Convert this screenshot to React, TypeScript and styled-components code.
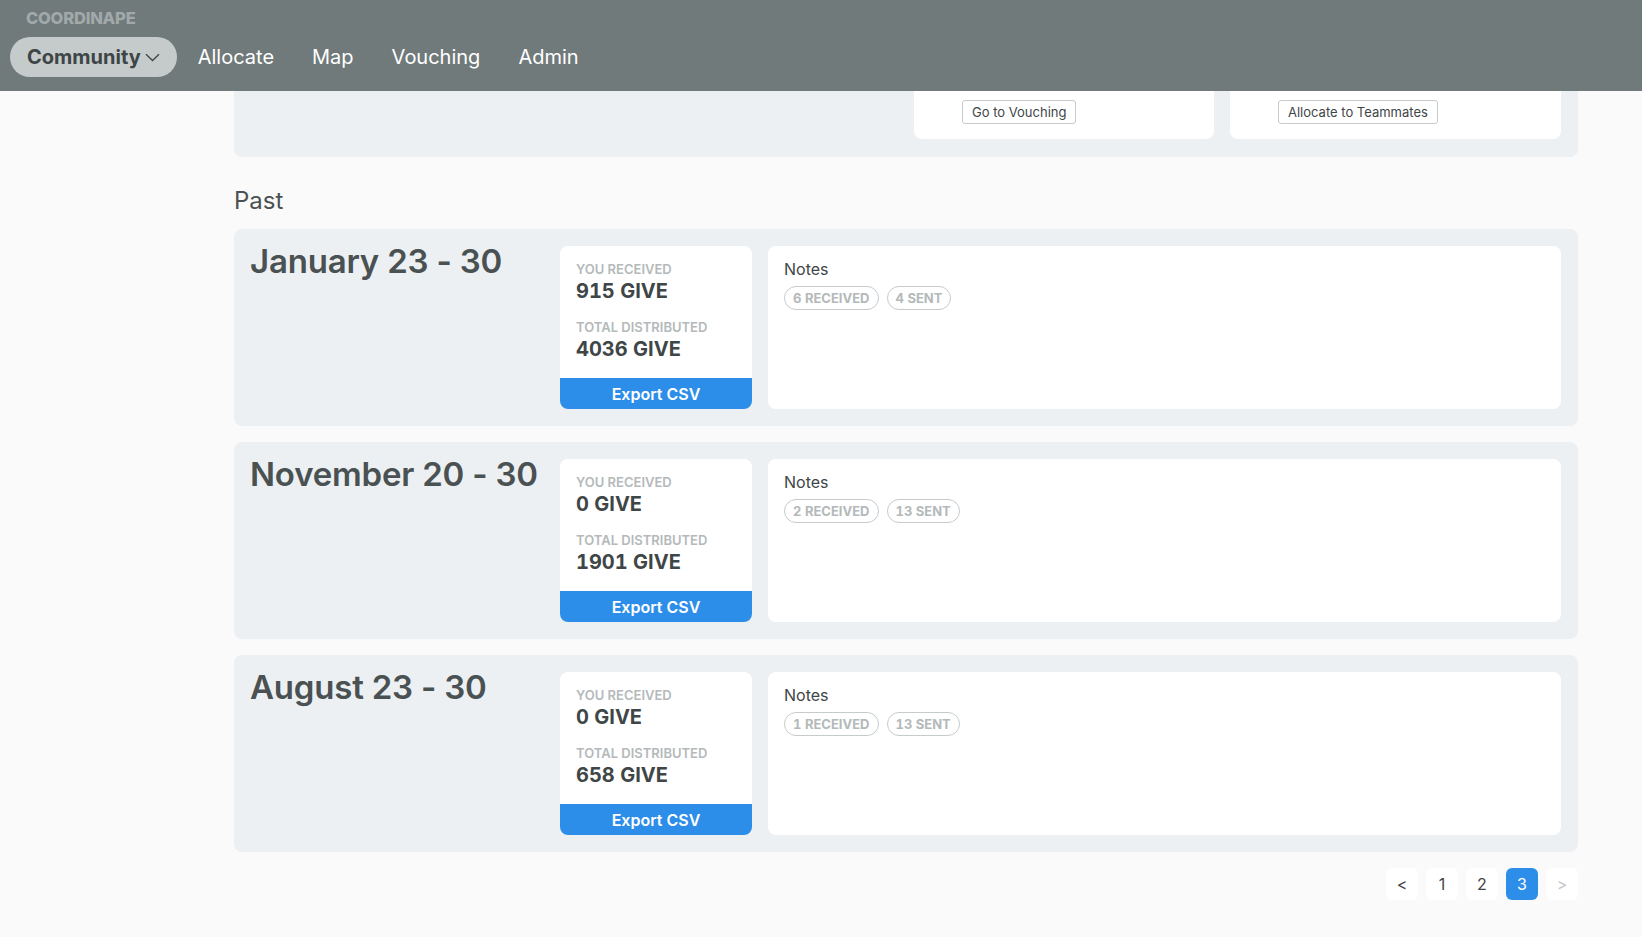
import React from "react";
import styled, { createGlobalStyle } from "styled-components";

const GlobalStyle = createGlobalStyle`
  html, body {
    margin: 0;
    padding: 0;
    background: #fafafa;
    font-family: Inter, "Noto Sans", sans-serif;
    color: #3f4647;
    overflow: hidden;
  }
  * { box-sizing: border-box; }
`;

const Header = styled.header`
  height: 91px;
  background: #707a7b;
  padding: 8px 10px 0;
  display: flex;
  flex-direction: column;
`;

const Brand = styled.div`
  font-size: 16.5px;
  font-weight: 800;
  color: #a1a9aa;
  letter-spacing: -0.2px;
  padding-left: 16px;
  line-height: 20px;
`;

const Nav = styled.nav`
  display: flex;
  align-items: center;
  gap: 4px;
  margin-top: 9px;
`;

const NavItem = styled.a<{ $active?: boolean }>`
  display: flex;
  align-items: center;
  gap: 4px;
  height: 40px;
  padding: 0 17px;
  border-radius: 20px;
  font-size: 20px;
  font-weight: ${(p) => (p.$active ? 700 : 400)};
  color: ${(p) => (p.$active ? "#3e4546" : "#ffffff")};
  background: ${(p) => (p.$active ? "#c5cbcb" : "transparent")};
  cursor: pointer;
`;

const Main = styled.main`
  padding: 0 64px 0 234px;
  display: flex;
  flex-direction: column;
`;

const TopCard = styled.section`
  background: #edf0f3;
  border-radius: 0 0 8px 8px;
  padding: 0 17px 18px;
  display: flex;
  gap: 16px;
  justify-content: flex-end;
`;

const TopBox = styled.div<{ $w: number }>`
  width: ${(p) => p.$w}px;
  height: 48px;
  background: #ffffff;
  border-radius: 0 0 8px 8px;
  padding: 9px 48px 0;
`;

const SmallButton = styled.button`
  height: 24px;
  padding: 0 9px;
  border: 1px solid #c6cbcc;
  border-radius: 3px;
  background: #ffffff;
  font-family: inherit;
  font-size: 13px;
  color: #3f4647;
`;

const SectionTitle = styled.h2`
  margin: 29px 0 14px;
  font-size: 24px;
  font-weight: 400;
  line-height: 29px;
  color: #4a5152;
`;

const EpochList = styled.div`
  display: flex;
  flex-direction: column;
  gap: 16px;
`;

const EpochCard = styled.article`
  background: #edf0f3;
  border-radius: 8px;
  padding: 17px 17px 17px 16px;
  display: flex;
  gap: 16px;
`;

const EpochTitle = styled.h3`
  width: 294px;
  margin: -5px 0 0;
  font-size: 33px;
  font-weight: 600;
  line-height: 40px;
  color: #4a5152;
  letter-spacing: -0.2px;
`;

const StatsCard = styled.div`
  width: 192px;
  background: #ffffff;
  border-radius: 8px;
  display: flex;
  flex-direction: column;
  overflow: hidden;
`;

const StatsBody = styled.div`
  padding: 15px 16px 17px;
  display: flex;
  flex-direction: column;
  gap: 16px;
`;

const Stat = styled.div`
  display: flex;
  flex-direction: column;
  gap: 2px;
`;

const StatLabel = styled.span`
  font-size: 13px;
  font-weight: 600;
  line-height: 16px;
  color: #b4b9ba;
  text-transform: uppercase;
`;

const StatValue = styled.span`
  font-size: 20px;
  font-weight: 700;
  line-height: 24px;
  color: #3f4647;
  font-variant-numeric: tabular-nums;
`;

const ExportButton = styled.button`
  height: 31px;
  border: none;
  background: #2d8eea;
  color: #ffffff;
  font-family: inherit;
  font-size: 16px;
  font-weight: 600;
  margin-top: auto;
`;

const NotesCard = styled.div`
  flex: 1;
  background: #ffffff;
  border-radius: 8px;
  padding: 13px 16px;
  display: flex;
  flex-direction: column;
  gap: 7px;
`;

const NotesTitle = styled.span`
  font-size: 16px;
  line-height: 20px;
  color: #3f4647;
`;

const Pills = styled.div`
  display: flex;
  gap: 8px;
`;

const Pill = styled.span`
  height: 24px;
  padding: 0 8px;
  border: 1px solid #c6cbcc;
  border-radius: 12px;
  display: flex;
  align-items: center;
  font-size: 13px;
  font-weight: 700;
  color: #b4b9ba;
  text-transform: uppercase;
  font-variant-numeric: tabular-nums;
`;

const Pagination = styled.div`
  display: flex;
  justify-content: flex-end;
  gap: 8px;
  margin-top: 16px;
`;

const PageButton = styled.button<{ $active?: boolean; $disabled?: boolean }>`
  width: 32px;
  height: 32px;
  border: none;
  border-radius: 6px;
  font-family: inherit;
  font-size: 16px;
  background: ${(p) => (p.$active ? "#2d8eea" : "#ffffff")};
  color: ${(p) => (p.$active ? "#ffffff" : p.$disabled ? "#c2c6c7" : "#3f4647")};
`;

const Chevron = () => (
  <svg width="15" height="9" viewBox="0 0 15 9" fill="none">
    <path d="M1 1.2L7.5 7.5L14 1.2" stroke="#3e4546" strokeWidth="1.3" />
  </svg>
);

type Epoch = {
  title: string;
  received: string;
  distributed: string;
  notesReceived: number;
  notesSent: number;
};

const epochs: Epoch[] = [
  { title: "January 23 - 30", received: "915 GIVE", distributed: "4036 GIVE", notesReceived: 6, notesSent: 4 },
  { title: "November 20 - 30", received: "0 GIVE", distributed: "1901 GIVE", notesReceived: 2, notesSent: 13 },
  { title: "August 23 - 30", received: "0 GIVE", distributed: "658 GIVE", notesReceived: 1, notesSent: 13 },
];

export default function App() {
  return (
    <>
      <GlobalStyle />
      <Header>
        <Brand>COORDINAPE</Brand>
        <Nav>
          <NavItem $active>
            Community <Chevron />
          </NavItem>
          <NavItem>Allocate</NavItem>
          <NavItem>Map</NavItem>
          <NavItem>Vouching</NavItem>
          <NavItem>Admin</NavItem>
        </Nav>
      </Header>
      <Main>
        <TopCard>
          <TopBox $w={300}>
            <SmallButton>Go to Vouching</SmallButton>
          </TopBox>
          <TopBox $w={331}>
            <SmallButton>Allocate to Teammates</SmallButton>
          </TopBox>
        </TopCard>
        <SectionTitle>Past</SectionTitle>
        <EpochList>
          {epochs.map((e) => (
            <EpochCard key={e.title}>
              <EpochTitle>{e.title}</EpochTitle>
              <StatsCard>
                <StatsBody>
                  <Stat>
                    <StatLabel>You received</StatLabel>
                    <StatValue>{e.received}</StatValue>
                  </Stat>
                  <Stat>
                    <StatLabel>Total distributed</StatLabel>
                    <StatValue>{e.distributed}</StatValue>
                  </Stat>
                </StatsBody>
                <ExportButton>Export CSV</ExportButton>
              </StatsCard>
              <NotesCard>
                <NotesTitle>Notes</NotesTitle>
                <Pills>
                  <Pill>{e.notesReceived} Received</Pill>
                  <Pill>{e.notesSent} Sent</Pill>
                </Pills>
              </NotesCard>
            </EpochCard>
          ))}
        </EpochList>
        <Pagination>
          <PageButton>&lt;</PageButton>
          <PageButton>1</PageButton>
          <PageButton>2</PageButton>
          <PageButton $active>3</PageButton>
          <PageButton $disabled>&gt;</PageButton>
        </Pagination>
      </Main>
    </>
  );
}
